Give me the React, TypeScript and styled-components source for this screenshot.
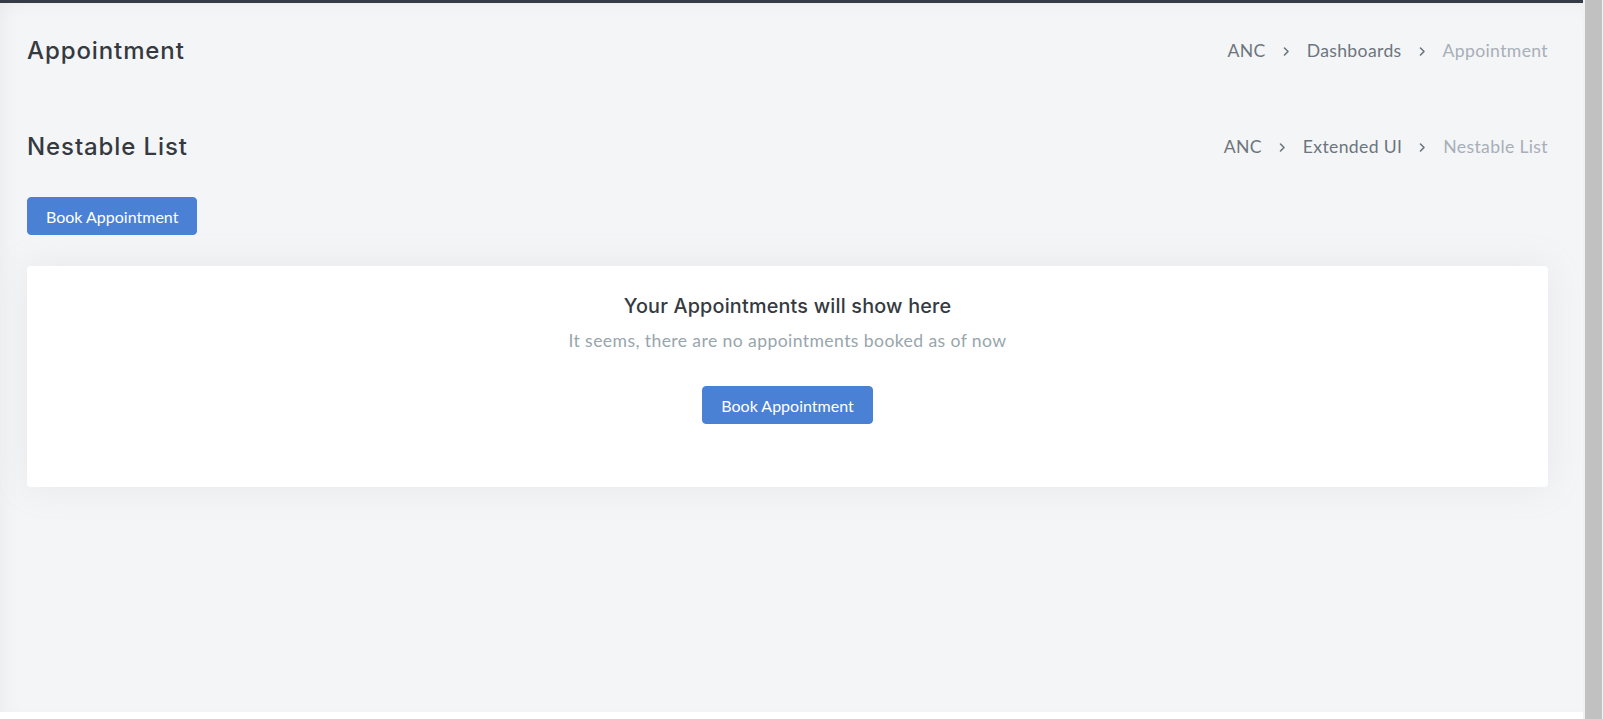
import { FC } from "react";
import styled, { createGlobalStyle } from "styled-components";

const GlobalStyle = createGlobalStyle`
  html, body {
    margin: 0;
    padding: 0;
    background: #ffffff;
    overflow: hidden;
  }
`;

interface Crumb {
  label: string;
}

interface PageTitleProps {
  title: string;
  crumbs: Crumb[];
}

const Chevron = () => (
  <ChevronIcon width="7" height="9" viewBox="0 0 7 9">
    <polyline points="1.5,1 5,4.5 1.5,8" fill="none" stroke="currentColor" strokeWidth="1.6" strokeLinecap="round" strokeLinejoin="round" />
  </ChevronIcon>
);

const PageTitle: FC<PageTitleProps> = ({ title, crumbs }) => (
  <TitleRow>
    <Title>{title}</Title>
    <Breadcrumb>
      {crumbs.map((c, i) => (
        <CrumbItem key={c.label} active={i === crumbs.length - 1}>
          {i > 0 && <Chevron />}
          <span>{c.label}</span>
        </CrumbItem>
      ))}
    </Breadcrumb>
  </TitleRow>
);

const App = () => (
  <>
    <GlobalStyle />
    <Screen>
      <Main>
        <TopBar />
        <Content>
          <PageTitle
            title="Appointment"
            crumbs={[{ label: "ANC" }, { label: "Dashboards" }, { label: "Appointment" }]}
          />
          <PageTitle
            title="Nestable List"
            crumbs={[{ label: "ANC" }, { label: "Extended UI" }, { label: "Nestable List" }]}
          />
          <div>
            <Button>Book Appointment</Button>
          </div>
          <Card>
            <EmptyTitle>Your Appointments will show here</EmptyTitle>
            <EmptyText>It seems, there are no appointments booked as of now</EmptyText>
            <Button>Book Appointment</Button>
          </Card>
        </Content>
        <Footer />
      </Main>
      <Scrollbar>
        <Thumb />
      </Scrollbar>
    </Screen>
  </>
);

const Screen = styled.div`
  display: flex;
  width: 1603px;
  height: 719px;
`;

const Main = styled.div`
  flex: 1;
  display: flex;
  flex-direction: column;
  min-width: 0;
`;

const TopBar = styled.div`
  height: 3px;
  background: #363c47;
`;

const Content = styled.div`
  flex: 1;
  background: #f4f5f7;
  padding: 0 35px 0 27px;
  box-shadow: inset 14px 0 22px -14px rgba(0, 0, 0, 0.05), inset 0 14px 22px -14px rgba(0, 0, 0, 0.04);
`;

const TitleRow = styled.div`
  display: flex;
  align-items: center;
  justify-content: space-between;
  height: 94px;

  & + & {
    margin-top: 2px;
  }

  & + div {
    margin-top: 4px;
  }
`;

const Title = styled.h4`
  margin: 0;
  font-family: Inter, "Noto Sans", sans-serif;
  font-size: 24px;
  font-weight: 500;
  letter-spacing: 0.9px;
  color: #343a40;
`;

const Breadcrumb = styled.div`
  display: flex;
  align-items: center;
  font-family: Lato, "Noto Sans", sans-serif;
  font-size: 17.6px;
  letter-spacing: 0.35px;
`;

const CrumbItem = styled.div<{ active: boolean }>`
  display: flex;
  align-items: center;
  color: ${({ active }) => (active ? "#a7afb8" : "#6c757d")};
`;

const ChevronIcon = styled.svg`
  color: #6c757d;
  margin: 0 17px;
  position: relative;
  top: 1px;
`;

const Button = styled.button`
  display: inline-flex;
  align-items: center;
  justify-content: center;
  height: 38px;
  padding: 0 18px;
  border: 1px solid #4a81d4;
  border-radius: 4px;
  background: #4a81d4;
  color: #ffffff;
  font-family: Lato, "Noto Sans", sans-serif;
  font-size: 16px;
  cursor: pointer;
`;

const Card = styled.div`
  margin-top: 31px;
  background: #ffffff;
  border-radius: 4px;
  padding: 28px 20px 63px;
  display: flex;
  flex-direction: column;
  align-items: center;
  box-shadow: 0 0 35px 0 rgba(154, 161, 171, 0.15);
`;

const EmptyTitle = styled.h4`
  margin: 0 0 10px;
  font-family: Inter, "Noto Sans", sans-serif;
  font-size: 19.8px;
  font-weight: 500;
  line-height: 24px;
  letter-spacing: 0.2px;
  color: #343a40;
`;

const EmptyText = styled.p`
  margin: 0 0 32px;
  font-family: Lato, "Noto Sans", sans-serif;
  font-size: 17.6px;
  line-height: 26.4px;
  letter-spacing: 0.4px;
  color: #98a6ad;
`;

const Footer = styled.div`
  height: 7px;
  background: #ffffff;
`;

const Scrollbar = styled.div`
  width: 20px;
  background: #f1f1f1;
  display: flex;
  padding: 0 1px 0 2px;
  box-sizing: border-box;
`;

const Thumb = styled.div`
  flex: 1;
  background: #c1c1c1;
`;

export default App;
